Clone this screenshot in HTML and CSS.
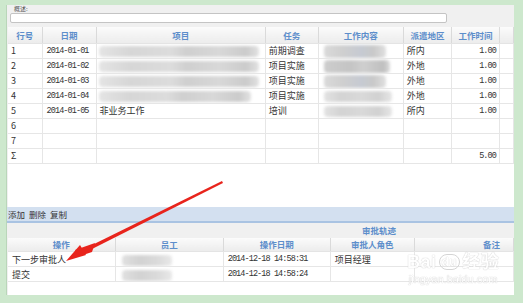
FILE: index.html
```html
<!DOCTYPE html>
<html lang="zh-CN">
<head>
    <meta charset="UTF-8">
    <title>工作日志</title>
    <link rel="stylesheet" href="styles.css">
</head>
<body>
    <div class="panel">
        <div class="summary">
            <div class="summary-label">概述:</div>
            <div class="summary-input"></div>
        </div>

        <table class="grid work-grid">
            <colgroup>
                <col style="width:34px"><col style="width:54px"><col style="width:169px"><col style="width:53px">
                <col style="width:85px"><col style="width:48px"><col style="width:48px"><col style="width:14px">
            </colgroup>
            <thead>
                <tr>
                    <th>行号</th><th>日期</th><th>项目</th><th>任务</th>
                    <th>工作内容</th><th>派遣地区</th><th>工作时间</th><th></th>
                </tr>
            </thead>
            <tbody>
                <tr>
                    <td>1</td><td class="num">2014-01-01</td>
                    <td><span class="blur blur-project"></span></td>
                    <td>前期调查</td>
                    <td><span class="blur blur-dark"></span></td>
                    <td>所内</td><td class="num right">1.00</td><td></td>
                </tr>
                <tr>
                    <td>2</td><td class="num">2014-01-02</td>
                    <td><span class="blur blur-project"></span></td>
                    <td>项目实施</td>
                    <td><span class="blur blur-dark blur-mid"></span></td>
                    <td>外地</td><td class="num right">1.00</td><td></td>
                </tr>
                <tr>
                    <td>3</td><td class="num">2014-01-03</td>
                    <td><span class="blur blur-project"></span></td>
                    <td>项目实施</td>
                    <td><span class="blur blur-dark"></span></td>
                    <td>外地</td><td class="num right">1.00</td><td></td>
                </tr>
                <tr>
                    <td>4</td><td class="num">2014-01-04</td>
                    <td><span class="blur blur-project short"></span></td>
                    <td>项目实施</td>
                    <td><span class="blur blur-content"></span></td>
                    <td>外地</td><td class="num right">1.00</td><td></td>
                </tr>
                <tr>
                    <td>5</td><td class="num">2014-01-05</td>
                    <td>非业务工作</td>
                    <td>培训</td>
                    <td><span class="blur blur-content"></span></td>
                    <td>所内</td><td class="num right">1.00</td><td></td>
                </tr>
                <tr><td>6</td><td></td><td></td><td></td><td></td><td></td><td></td><td></td></tr>
                <tr><td>7</td><td></td><td></td><td></td><td></td><td></td><td></td><td></td></tr>
                <tr>
                    <td>Σ</td><td></td><td></td><td></td><td></td><td></td>
                    <td class="num right">5.00</td><td></td>
                </tr>
            </tbody>
        </table>

        <div class="filler"></div>

        <div class="toolbar">
            <span>添加</span><span>删除</span><span>复制</span>
        </div>

        <div class="trail-title">审批轨迹</div>

        <table class="grid trail-grid">
            <colgroup>
                <col style="width:107px"><col style="width:108px"><col style="width:107px">
                <col style="width:84px"><col style="width:99px">
            </colgroup>
            <thead>
                <tr>
                    <th>操作</th><th>员工</th><th>操作日期</th><th>审批人角色</th><th class="right">备注</th>
                </tr>
            </thead>
            <tbody>
                <tr>
                    <td>下一步审批人</td>
                    <td><span class="blur blur-staff"></span></td>
                    <td class="num">2014-12-18 14:58:31</td>
                    <td>项目经理</td><td></td>
                </tr>
                <tr>
                    <td>提交</td>
                    <td><span class="blur blur-staff"></span></td>
                    <td class="num">2014-12-18 14:58:24</td>
                    <td></td><td></td>
                </tr>
            </tbody>
        </table>
    </div>

    <div class="watermark">
        <div class="wm-logo">Bai<span class="wm-du">du</span>经验</div>
        <div class="wm-url">jingyan.baidu.com</div>
    </div>

    <svg class="arrow" width="523" height="303" viewBox="0 0 523 303">
        <polygon points="222,181 223,183 90,250 88,247" fill="#e8241c"/>
        <polygon points="66,261 80,245 86,255" fill="#e8241c"/>
        <polygon points="75,250 95,243 92,252 80,256" fill="#e8241c"/>
    </svg>
</body>
</html>
```

FILE: styles.css
```css
* {
    margin: 0;
    padding: 0;
    box-sizing: border-box;
}

body {
    background-color: #cde8cd;
    font-family: "Noto Sans CJK SC", "Liberation Sans", sans-serif;
    font-size: 9px;
    color: #333;
    padding: 5px 9px 8px 6px;
    width: 523px;
    height: 303px;
    overflow: hidden;
}

.panel {
    width: 508px;
    height: 290px;
    background-color: #f0f0f0;
    border-left: 1px solid #b9d6b9;
    display: flex;
    flex-direction: column;
}

.summary {
    height: 22px;
    padding: 0 0 0 3px;
}

.summary-label {
    font-size: 6px;
    line-height: 8px;
    color: #555;
    padding-left: 4px;
}

.summary-input {
    width: 437px;
    height: 10px;
    background: #fff;
    border: 1px solid #c4c4c4;
    border-radius: 2px;
}

.grid {
    border-collapse: collapse;
    table-layout: fixed;
    margin-left: 1px;
    background: #fff;
}

.grid th {
    height: 16px;
    font-weight: bold;
    font-size: 8.5px;
    color: #5d8ecb;
    background: linear-gradient(#fbfbfb, #ececec);
    border-right: 1px solid #dadada;
    border-bottom: 1px solid #e4e4e4;
    text-align: center;
    padding: 0;
}

.grid td {
    height: 15px;
    border: 1px solid #e6e6e6;
    border-top: 0;
    padding: 0 3px;
    white-space: nowrap;
    overflow: hidden;
    vertical-align: middle;
}

.grid td:first-child {
    border-left: 0;
}

.grid .num {
    font-family: "Liberation Mono", monospace;
    font-size: 8.5px;
    letter-spacing: -0.9px;
    color: #333;
}

.grid .right {
    text-align: right;
}

.grid th.right {
    text-align: right;
    padding-right: 13px;
}

.work-grid td:nth-child(2) {
    padding-left: 4px;
}

.blur {
    display: inline-block;
    vertical-align: middle;
    height: 11px;
    filter: blur(1.6px);
    border-radius: 4px;
}

.blur-project {
    width: 160px;
    margin-left: -1px;
    background: linear-gradient(90deg, #e4e4e4 0%, #d6d6d6 20%, #dcdcdc 45%, #cfcfcf 55%, #d8d8d8 75%, #cbcbcb 92%, #e2e2e2 100%);
}

.blur-project.short {
    width: 152px;
}

.blur-dark {
    width: 62px;
    margin-left: 2px;
    height: 13px;
    background: linear-gradient(90deg, #d9d9d9 0%, #cfcfcf 30%, #c6cad2 60%, #c9c9c9 80%, #e0e0e0 100%);
}

.blur-mid {
    width: 66px;
    background: linear-gradient(90deg, #cdcdcd 0%, #c4c4c4 40%, #cfcfcf 60%, #bfbfbf 90%, #dcdcdc 100%);
}

.blur-content {
    width: 68px;
    margin-left: 2px;
    background: linear-gradient(90deg, #e2e2e2 0%, #d3d3d3 25%, #d9d9d9 55%, #d1d1d1 80%, #e6e6e6 100%);
}

.blur-staff {
    width: 50px;
    margin-left: 2px;
    background: linear-gradient(90deg, #e0e0e0 0%, #d2d2d2 35%, #dadada 70%, #e8e8e8 100%);
}

.filler {
    height: 43px;
    background: #fff;
    margin-left: 1px;
}

.toolbar {
    height: 16px;
    background: #d3e0f0;
    border-bottom: 2px solid #a9c3e2;
    display: flex;
    align-items: center;
    gap: 4px;
    padding-left: 1px;
    font-size: 8.5px;
    color: #333;
}

.trail-title {
    height: 15px;
    line-height: 15px;
    padding-left: 355px;
    font-size: 8.5px;
    font-weight: bold;
    color: #5d8ecb;
}

.trail-grid th {
    height: 14px;
}

.trail-grid td {
    padding-left: 4px;
}

.panel::after {
    content: "";
    flex: 1;
    background: #fff;
    margin-left: 1px;
}

.watermark {
    position: absolute;
    left: 407px;
    top: 253px;
    color: #fff;
    text-shadow: 0 0 1px #c8c8c8, 0 0 1px #c8c8c8;
    opacity: 0.9;
    font-family: "Liberation Sans", "Noto Sans CJK SC", sans-serif;
    text-align: center;
}

.wm-logo {
    font-size: 18px;
    font-weight: bold;
    line-height: 19px;
    letter-spacing: 0.5px;
}

.wm-du {
    font-size: 12px;
    vertical-align: 2px;
    border: 1px solid #d0d0d0;
    border-radius: 8px;
    padding: 0 2px;
    margin: 0 2px;
}

.wm-url {
    font-size: 11px;
    line-height: 13px;
    margin-top: 1px;
}

.arrow {
    position: absolute;
    left: 0;
    top: 0;
}
```
